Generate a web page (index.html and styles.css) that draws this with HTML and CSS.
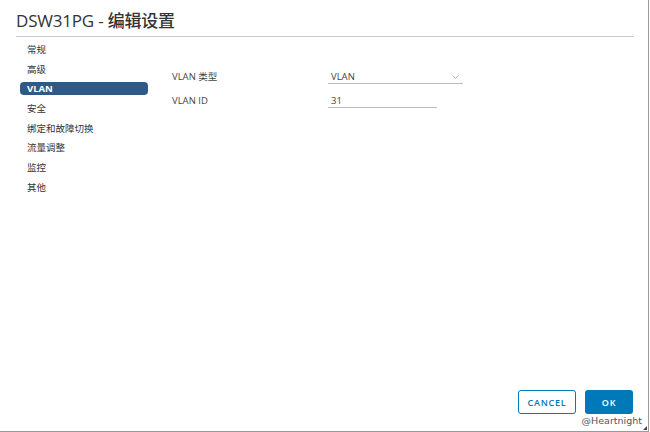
FILE: index.html
```html
<!DOCTYPE html>
<html lang="zh-CN">
<head>
    <meta charset="UTF-8">
    <title>DSW31PG - 编辑设置</title>
    <link rel="stylesheet" href="styles.css">
</head>
<body>
    <div class="dialog">
        <h1 class="title">DSW31PG - <span class="title-cn">编辑设置</span></h1>
        <div class="content">
            <ul class="nav">
                <li>常规</li>
                <li>高级</li>
                <li class="active">VLAN</li>
                <li>安全</li>
                <li>绑定和故障切换</li>
                <li>流量调整</li>
                <li>监控</li>
                <li>其他</li>
            </ul>
            <div class="form">
                <div class="row">
                    <label class="label">VLAN 类型</label>
                    <div class="select">VLAN
                        <svg class="chevron" width="7" height="4" viewBox="0 0 7 4"><path d="M0.5 0.5 L3.5 3.3 L6.5 0.5" fill="none" stroke="#aab2b9" stroke-width="1"/></svg>
                    </div>
                </div>
                <div class="row">
                    <label class="label">VLAN ID</label>
                    <div class="input">31</div>
                </div>
            </div>
        </div>
        <div class="footer">
            <button class="btn btn-outline">CANCEL</button>
            <button class="btn btn-primary">OK</button>
        </div>
        <div class="watermark">@Heartnight</div>
        <div class="grip"></div>
    </div>
</body>
</html>
```

FILE: styles.css
```css
body {
    margin: 0;
    background: #fff;
    font-family: "Open Sans", "Noto Sans CJK SC", sans-serif;
    color: #333;
}
.dialog {
    position: relative;
    width: 648px;
    height: 431px;
    border-right: 1px solid #9a9a9a;
    border-bottom: 1px solid #9a9a9a;
    box-sizing: content-box;
    display: flex;
    flex-direction: column;
}
.title {
    margin: 0 14px 0 16px;
    padding: 9px 0 4px;
    font-size: 17px;
    font-weight: 400;
    line-height: 22px;
    color: #333;
    border-bottom: 1px solid #ccc;
    letter-spacing: -0.2px;
}
.title-cn {
    font-family: "Noto Sans CJK SC", sans-serif;
    font-weight: 500;
}
.content {
    display: flex;
    padding-top: 6px;
    flex: 1;
}
.nav {
    list-style: none;
    margin: 0;
    padding: 0 0 0 20px;
    width: 128px;
}
.nav li {
    height: 13px;
    line-height: 13px;
    margin-bottom: 6.7px;
    padding-left: 7px;
    font-size: 9.5px;
    font-family: "Noto Sans CJK SC", sans-serif;
    color: #333;
    border-radius: 4px;
}
.nav li.active {
    background: #2f5a88;
    color: #fff;
    font-family: "Open Sans", sans-serif;
    font-weight: 700;
}
.form {
    padding: 27px 0 0 24px;
}
.row {
    display: flex;
    align-items: baseline;
    margin-bottom: 10px;
}
.label {
    width: 156px;
    font-size: 9.5px;
    line-height: 13px;
    color: #444;
}
.select, .input {
    position: relative;
    font-size: 9.5px;
    line-height: 13px;
    color: #444;
    padding: 0 0 0 3px;
    border-bottom: 1px solid #bbb;
}
.select {
    width: 132px;
}
.input {
    width: 106px;
}
.chevron {
    position: absolute;
    right: 4px;
    top: 5px;
}
.footer {
    display: flex;
    justify-content: flex-end;
    gap: 9px;
    padding: 0 15px 17px 0;
}
.btn {
    height: 24px;
    border-radius: 3px;
    font-family: "Open Sans", sans-serif;
    font-size: 9px;
    font-weight: 600;
    letter-spacing: 0.8px;
    cursor: pointer;
}
.btn-outline {
    width: 58px;
    background: #fff;
    color: #0079b8;
    border: 1px solid #0079b8;
}
.btn-primary {
    width: 48px;
    background: #0079b8;
    color: #fff;
    border: none;
}
.watermark {
    position: absolute;
    right: 6px;
    bottom: 5px;
    font-family: "DejaVu Sans", sans-serif;
    font-size: 9.5px;
    color: #555;
    text-shadow: 0 0 2px #fff, 0 0 2px #fff;
}
.grip {
    position: absolute;
    right: 1px;
    bottom: 1px;
    width: 0;
    height: 0;
    border-left: 4px solid transparent;
    border-bottom: 4px solid #444;
}
```
